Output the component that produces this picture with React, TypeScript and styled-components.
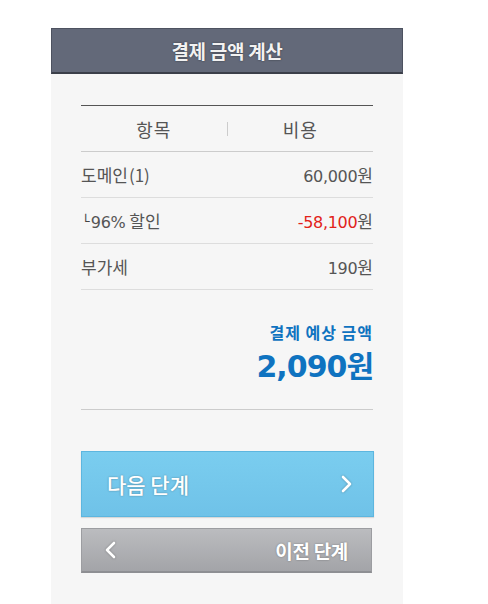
import React from "react";
import styled, { createGlobalStyle } from "styled-components";

const Global = createGlobalStyle`
  html, body { margin: 0; padding: 0; background: #ffffff; }
  body { font-family: "Noto Sans CJK KR", "Noto Sans", sans-serif; }
`;

const Panel = styled.div`
  margin: 28px 0 0 51px;
  width: 352px;
  min-height: 576px;
  background: #f6f6f6;
  display: flex;
  flex-direction: column;
`;

const Header = styled.div`
  box-sizing: border-box;
  height: 46px;
  background: #636979;
  border: 1px solid #4d5260;
  border-bottom: 2px solid #3b3f49;
  display: flex;
  align-items: center;
  justify-content: center;
  color: #f2f2f2;
  font-size: 19px;
  font-weight: 700;
  letter-spacing: -0.3px;
  text-shadow: 0 0 2px rgba(0, 0, 0, 0.5);
`;

const Body = styled.div`
  padding: 31px 30px 0 30px;
  display: flex;
  flex-direction: column;
`;

const Table = styled.div`
  border-top: 1px solid #555555;
  display: flex;
  flex-direction: column;
`;

const HeadRow = styled.div`
  height: 46px;
  box-sizing: border-box;
  border-bottom: 1px solid #cccccc;
  display: grid;
  grid-template-columns: 1fr 1px 1fr;
  align-items: center;
  font-size: 18px;
  color: #555555;
  letter-spacing: 1px;
`;

const HeadCell = styled.div`
  text-align: center;
`;

const Divider = styled.div`
  width: 1px;
  height: 14px;
  background: #cccccc;
`;

const Row = styled.div`
  height: 46px;
  box-sizing: border-box;
  border-bottom: 1px solid #dddddd;
  display: flex;
  align-items: center;
  justify-content: space-between;
  font-size: 17px;
  color: #555555;
`;

const Num = styled.span<{ $red?: boolean }>`
  font-family: "DejaVu Sans", "Noto Sans CJK KR", sans-serif;
  font-size: 16px;
  letter-spacing: -0.3px;
  color: ${(p) => (p.$red ? "#e2231a" : "#555555")};
`;

const Paren = styled.span`
  font-size: 17px;
  margin-left: 1px;
`;

const Mark = styled.span`
  font-family: "DejaVu Sans Mono", monospace;
  font-size: 13px;
  font-weight: 700;
  color: #444444;
  position: relative;
  top: -2px;
  margin: 0 1px 0 1px;
`;

const Total = styled.div`
  display: flex;
  flex-direction: column;
  align-items: flex-end;
  padding: 30px 0 22px;
  border-bottom: 1px solid #cccccc;
  color: #0f73c0;
`;

const TotalLabel = styled.div`
  font-size: 16px;
  font-weight: 700;
  letter-spacing: 1px;
  line-height: 24px;
`;

const TotalValue = styled.div`
  margin-top: 3px;
  font-size: 30px;
  font-weight: 700;
  line-height: 40px;
  font-family: "DejaVu Sans", "Noto Sans CJK KR", sans-serif;
  letter-spacing: -1px;
`;

const Buttons = styled.div`
  display: flex;
  flex-direction: column;
  gap: 11px;
  padding-top: 41px;
`;

const NextButton = styled.button`
  box-sizing: border-box;
  height: 66px;
  width: 293px;
  border: 1px solid #5db6df;
  background: linear-gradient(#7acdef, #6fc2e8);
  display: flex;
  align-items: center;
  justify-content: space-between;
  padding: 0 20px 0 25px;
  color: #ffffff;
  font-family: "Noto Sans CJK KR", sans-serif;
  font-size: 21px;
  font-weight: 500;
  text-shadow: 0 0 2px rgba(0, 0, 0, 0.35);
  box-shadow: 0 1px 1px rgba(0, 0, 0, 0.12);
  cursor: pointer;
`;

const PrevButton = styled.button`
  box-sizing: border-box;
  height: 45px;
  width: 291px;
  border: 1px solid #9c9da1;
  border-bottom: 2px solid #8e8f93;
  background: linear-gradient(#bbbcbf, #a3a4a8);
  display: flex;
  align-items: center;
  justify-content: space-between;
  padding: 0 23px 0 22px;
  color: #ffffff;
  font-family: "Noto Sans CJK KR", sans-serif;
  font-size: 19px;
  font-weight: 700;
  letter-spacing: -0.3px;
  text-shadow: 0 0 2px rgba(0, 0, 0, 0.35);
  cursor: pointer;
`;

const Chevron = ({ dir }: { dir: "left" | "right" }) => (
  <svg width="12" height="18" viewBox="0 0 12 18" style={{ filter: "drop-shadow(0 0 1px rgba(0,0,0,0.3))" }}>
    <path
      d={dir === "right" ? "M2 2 L9 9 L2 16" : "M10 2 L3 9 L10 16"}
      fill="none"
      stroke="#ffffff"
      strokeWidth="2.6"
      strokeLinecap="round"
      strokeLinejoin="round"
    />
  </svg>
);

export default function App() {
  return (
    <>
      <Global />
      <Panel>
        <Header>결제 금액 계산</Header>
        <Body>
          <Table>
            <HeadRow>
              <HeadCell>항목</HeadCell>
              <Divider />
              <HeadCell>비용</HeadCell>
            </HeadRow>
            <Row>
              <span>
                도메인<Paren>(1)</Paren>
              </span>
              <span>
                <Num>60,000</Num>원
              </span>
            </Row>
            <Row>
              <span>
                <Mark>└</Mark>
                <Num>96%</Num> 할인
              </span>
              <span>
                <Num $red>-58,100</Num>원
              </span>
            </Row>
            <Row>
              <span>부가세</span>
              <span>
                <Num>190</Num>원
              </span>
            </Row>
          </Table>
          <Total>
            <TotalLabel>결제 예상 금액</TotalLabel>
            <TotalValue>2,090원</TotalValue>
          </Total>
          <Buttons>
            <NextButton>
              <span>다음 단계</span>
              <Chevron dir="right" />
            </NextButton>
            <PrevButton>
              <Chevron dir="left" />
              <span>이전 단계</span>
            </PrevButton>
          </Buttons>
        </Body>
      </Panel>
    </>
  );
}
